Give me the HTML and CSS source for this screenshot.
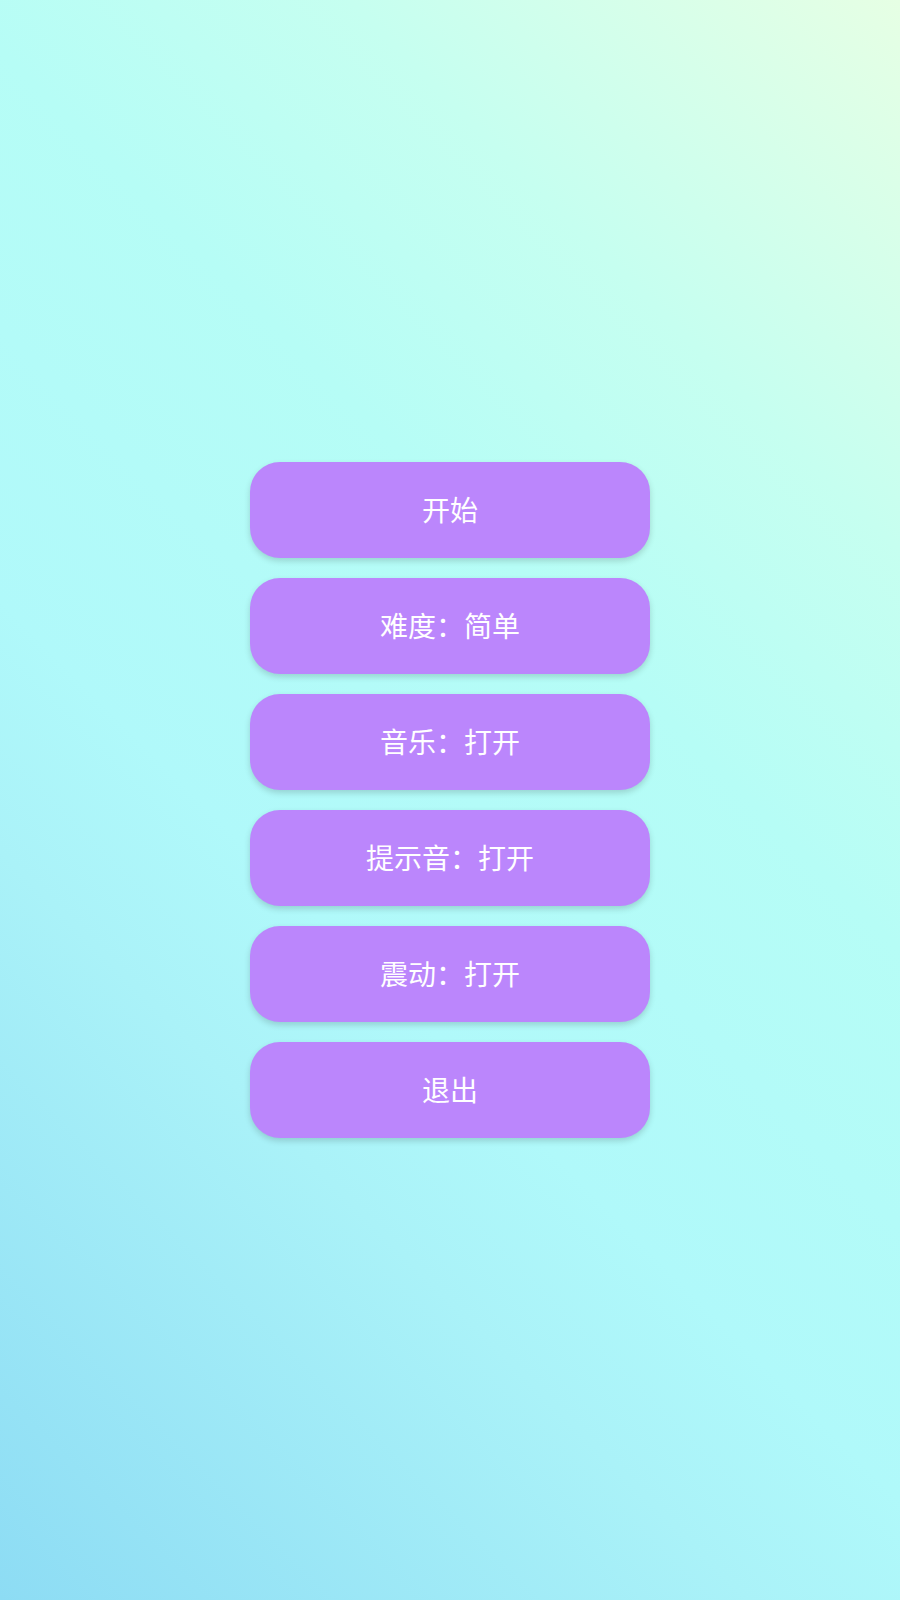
FILE: index.html
```html
<!DOCTYPE html>
<html lang="zh-CN">
<head>
  <meta charset="UTF-8">
  <meta name="viewport" content="width=device-width, initial-scale=1.0">
  <title>菜单</title>
  <link rel="stylesheet" href="styles.css">
</head>
<body>
  <div class="menu">
    <button class="btn">开始</button>
    <button class="btn">难度：简单</button>
    <button class="btn">音乐：打开</button>
    <button class="btn">提示音：打开</button>
    <button class="btn">震动：打开</button>
    <button class="btn">退出</button>
  </div>
</body>
</html>
```

FILE: styles.css
```css
html, body {
  height: 100%;
}

body {
  margin: 0;
  min-height: 1600px;
  display: flex;
  align-items: center;
  justify-content: center;
  background: linear-gradient(45deg, #8ddcf4 0%, #aaf2f8 30%, #b0f9fa 40%, #b6fdf6 62%, #c6fff0 78%, #e6ffe4 100%);
  font-family: "Noto Sans CJK SC", "Noto Sans", sans-serif;
}

.menu {
  display: flex;
  flex-direction: column;
  gap: 20px;
  width: 400px;
}

.btn {
  height: 96px;
  padding: 0 0 3px;
  border: none;
  border-radius: 30px;
  background: #bb86fc;
  color: #fff;
  font-family: inherit;
  font-size: 28px;
  box-shadow: 0 3px 6px rgba(0, 0, 0, 0.16);
  cursor: pointer;
}
```
